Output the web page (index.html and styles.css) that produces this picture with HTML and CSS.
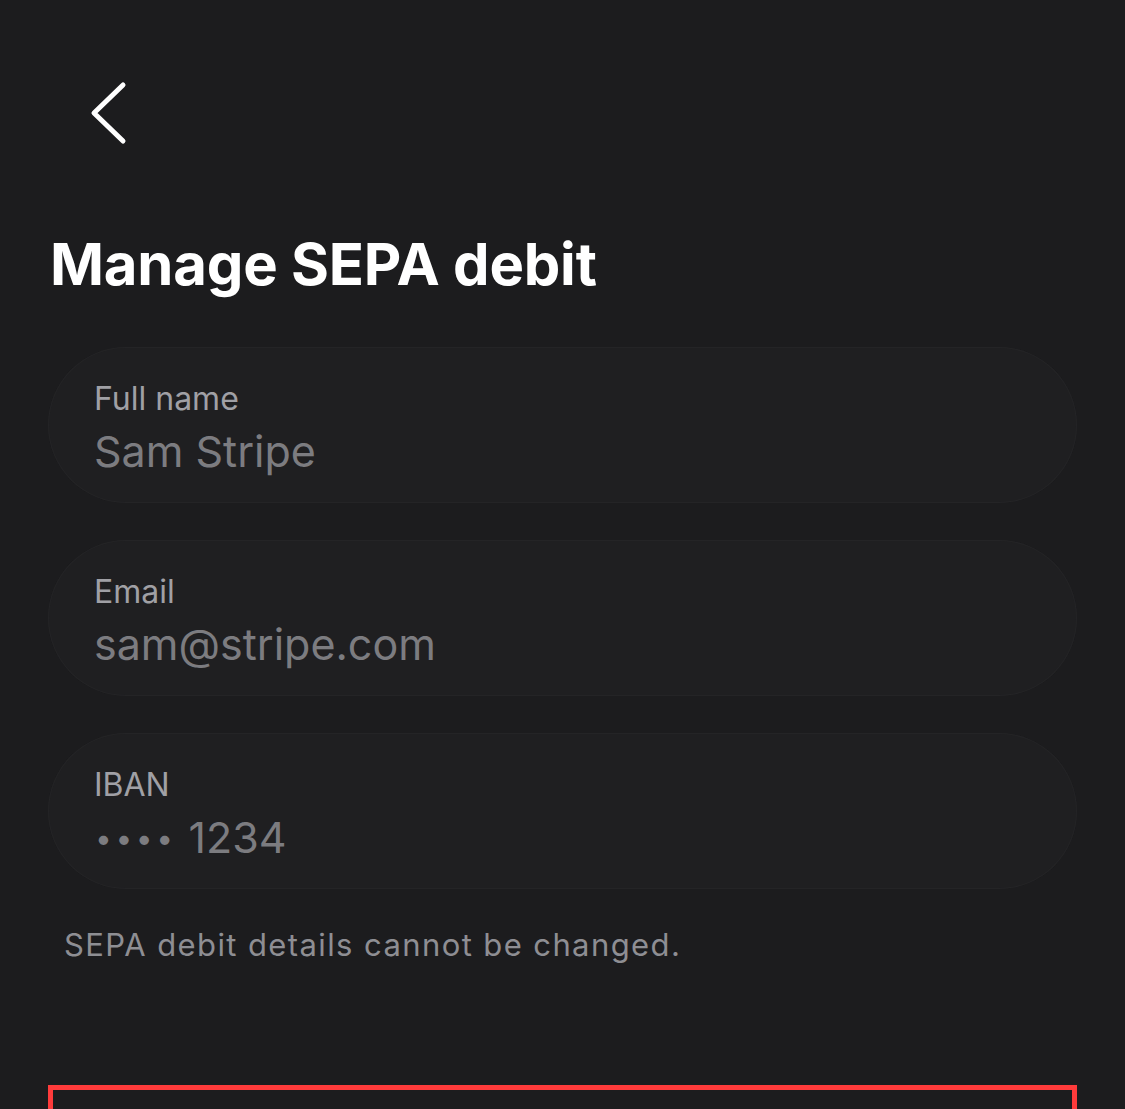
FILE: index.html
```html
<!DOCTYPE html>
<html lang="en">
<head>
<meta charset="utf-8">
<title>Manage SEPA debit</title>
<link rel="stylesheet" href="styles.css">
</head>
<body>
<div class="page">
  <div class="nav">
    <button class="back" aria-label="Back">
      <svg width="44" height="70" viewBox="0 0 44 70"><path d="M37 7 L8 35 L37 63" fill="none" stroke="#ffffff" stroke-width="5" stroke-linecap="round" stroke-linejoin="round"/></svg>
    </button>
  </div>
  <h1 class="title">Manage SEPA debit</h1>
  <div class="fields">
    <div class="field">
      <div class="label">Full name</div>
      <div class="value">Sam Stripe</div>
    </div>
    <div class="field">
      <div class="label">Email</div>
      <div class="value">sam@stripe.com</div>
    </div>
    <div class="field">
      <div class="label">IBAN</div>
      <div class="value"><span class="dots">••••</span> 1234</div>
    </div>
  </div>
  <p class="note">SEPA debit details cannot be changed.</p>
  <div class="action"></div>
</div>
</body>
</html>
```
FILE: styles.css
```css
html, body {
  margin: 0;
  padding: 0;
  background: #1c1c1e;
  height: 100%;
  overflow: hidden;
}
body {
  font-family: Inter, "Noto Sans", sans-serif;
  color: #ffffff;
}
.page {
  padding: 0 48px;
}
.nav {
  height: 230px;
  display: flex;
  align-items: flex-start;
  padding-top: 78px;
  box-sizing: border-box;
}
.back {
  background: none;
  border: 0;
  padding: 0;
  margin-left: 38px;
  width: 44px;
  height: 70px;
  display: block;
}
.back svg { display: block; }
.title {
  margin: 0;
  margin-left: 2px;
  font-size: 58px;
  font-weight: 700;
  line-height: 68px;
  letter-spacing: -0.2px;
  height: 117px;
}
.fields {
  display: flex;
  flex-direction: column;
  gap: 37px;
}
.field {
  height: 156px;
  border-radius: 78px;
  background: #1f1f21;
  box-shadow: inset 0 0 0 1px #242426;
  box-sizing: border-box;
  padding: 32px 0 0 46px;
  display: flex;
  flex-direction: column;
}
.label {
  font-size: 32px;
  line-height: 40px;
  color: #a0a0a5;
}
.value {
  font-size: 43px;
  line-height: 64px;
  color: #7c7c80;
}
.dots {
  font-size: 30px;
  letter-spacing: 3.5px;
  position: relative;
  top: -4px;
  margin-left: 1px;
}
.note {
  margin: 36px 0 0 16px;
  font-size: 31px;
  line-height: 40px;
  color: #8e8e93;
  letter-spacing: 1.4px;
}
.action {
  margin-top: 120px;
  height: 120px;
  border: 5px solid #ff3b3b;
  box-sizing: border-box;
}
```
